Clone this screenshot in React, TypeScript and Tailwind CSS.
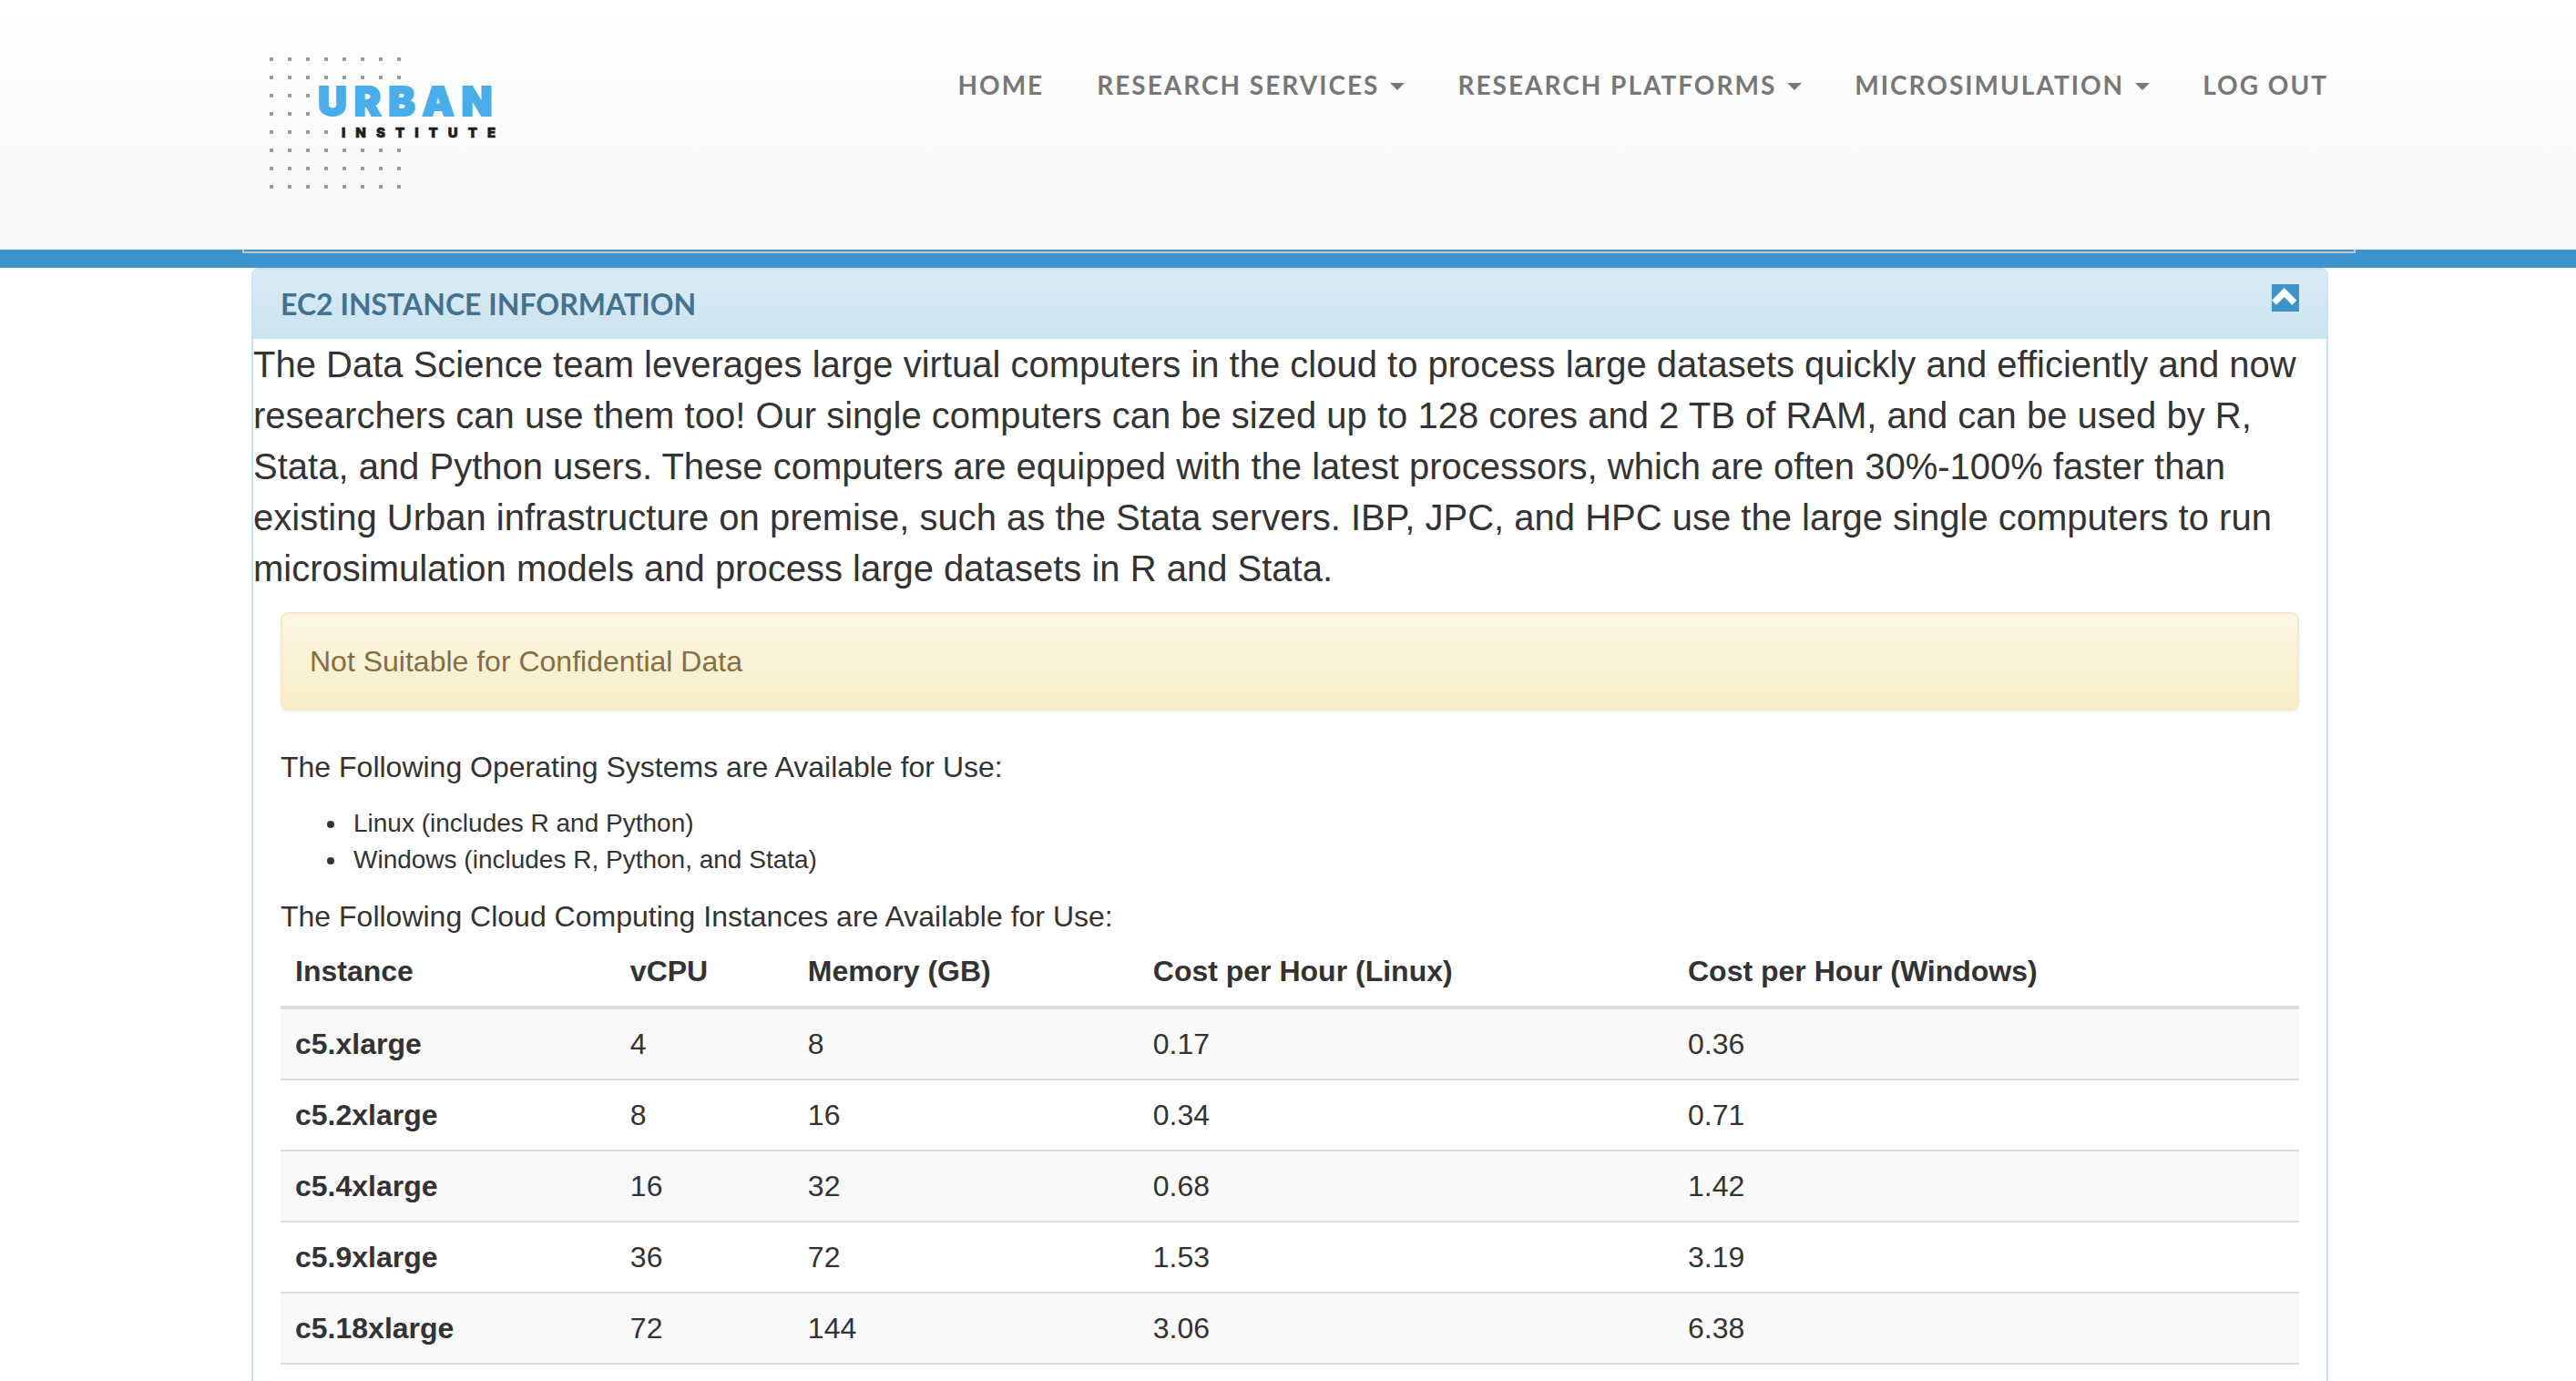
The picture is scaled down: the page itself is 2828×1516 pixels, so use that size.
import React from "react";

const navItems = [
  { label: "HOME", menu: false },
  { label: "RESEARCH SERVICES", menu: true },
  { label: "RESEARCH PLATFORMS", menu: true },
  { label: "MICROSIMULATION", menu: true },
  { label: "LOG OUT", menu: false },
];

const columns = [
  { label: "Instance", width: "w-[16.6%]" },
  { label: "vCPU", width: "w-[8.8%]" },
  { label: "Memory (GB)", width: "w-[17.1%]" },
  { label: "Cost per Hour (Linux)", width: "w-[26.5%]" },
  { label: "Cost per Hour (Windows)", width: "w-[31%]" },
];

const rows = [
  ["c5.xlarge", "4", "8", "0.17", "0.36"],
  ["c5.2xlarge", "8", "16", "0.34", "0.71"],
  ["c5.4xlarge", "16", "32", "0.68", "1.42"],
  ["c5.9xlarge", "36", "72", "1.53", "3.19"],
  ["c5.18xlarge", "72", "144", "3.06", "6.38"],
];

// Number of dots in each row of the logo's grid
const dotRows = [8, 8, 3, 3, 4, 8, 8, 8];

function Logo() {
  return (
    <a href="#" aria-label="Urban Institute" className="block">
      <svg width="260" height="148" viewBox="0 0 260 148" className="block">
        {dotRows.map((count, row) =>
          Array.from({ length: count }, (_, col) => (
            <rect key={`${row}-${col}`} x={col * 20} y={row * 20} width="4" height="4" fill="#9b9b9b" />
          )),
        )}
        <text
          x="53"
          y="64"
          fill="#49adea"
          stroke="#49adea"
          strokeWidth="2"
          className="font-['Inter'] text-[44px] font-black tracking-[8px]"
        >
          URBAN
        </text>
        <text x="79" y="88" fill="#1d1d1d" stroke="#1d1d1d" strokeWidth="0.5" className="font-['Inter'] text-[15px] font-black tracking-[11px]">
          INSTITUTE
        </text>
      </svg>
    </a>
  );
}

function Header() {
  return (
    <header className="border-b-[20px] border-[#3d94cc] bg-linear-to-b from-white to-[#f8f8f8]">
      <div className="relative mx-auto flex h-[274px] w-full max-w-[2340px] items-start justify-between pr-7 pl-[52px]">
        <div className="pt-[63px]">
          <Logo />
        </div>
        <nav aria-label="Main" className="pt-[73px]">
          <ul className="flex gap-[58px] font-['Lato',sans-serif] text-[28px] leading-[40px] font-bold tracking-[2px] text-[#777]">
            {navItems.map((item) => (
              <li key={item.label}>
                <a href="#" className="flex items-center gap-3 whitespace-nowrap">
                  {item.label}
                  {item.menu && (
                    <svg width="16" height="8" viewBox="0 0 16 8" className="mt-1 fill-current" aria-hidden="true">
                      <path d="M0 0H16L8 8Z" />
                    </svg>
                  )}
                </a>
              </li>
            ))}
          </ul>
        </nav>
        <div className="absolute -right-0.5 left-[22px] top-full h-1 border-x-2 border-b-2 border-[#c5c5c5]" />
      </div>
    </header>
  );
}

function InstanceTable() {
  return (
    <table className="w-full table-fixed border-collapse text-left text-[32px] leading-[44px]">
      <thead>
        <tr className="border-b-4 border-[#ddd]">
          {columns.map((c) => (
            <th key={c.label} scope="col" className={`p-4 font-bold ${c.width}`}>
              {c.label}
            </th>
          ))}
        </tr>
      </thead>
      <tbody>
        {rows.map(([name, ...values]) => (
          <tr key={name} className="border-b-2 border-[#ddd] odd:bg-[#f9f9f9]">
            <th scope="row" className="p-4 font-bold">
              {name}
            </th>
            {values.map((v, i) => (
              <td key={i} className="p-4">
                {v}
              </td>
            ))}
          </tr>
        ))}
      </tbody>
    </table>
  );
}

export default function App() {
  return (
    <div className="flex min-h-screen flex-col bg-white font-['Liberation_Sans',Arial,sans-serif] text-[#333]">
      <Header />
      <main className="mx-auto flex w-full max-w-[2340px] flex-1 flex-col pr-7 pl-8">
        <section className="flex-1 rounded-t-lg border-2 border-b-0 border-[#c4e6f0]">
          <div className="flex items-start justify-between rounded-t-md bg-linear-to-b from-[#dcecf6] to-[#c9e3f0] px-[30px] py-4">
            <h1 className="font-['Lato',sans-serif] text-[32px] leading-[44px] font-bold text-[#437290]">
              EC2 INSTANCE INFORMATION
            </h1>
            <button type="button" aria-label="Collapse panel" className="block size-[30px] bg-[#3d94cc]">
              <svg width="30" height="30" viewBox="0 0 30 30" className="block" aria-hidden="true">
                <path d="M13.7 4L27.3 17.7L22.3 22.7L13.7 14.1L5 22.7L0 17.7Z" fill="#fff" />
              </svg>
            </button>
          </div>
          <p className="text-[40px] leading-[56px]">
            The Data Science team leverages large virtual computers in the cloud to process large datasets quickly and
            efficiently and now researchers can use them too! Our single computers can be sized up to 128 cores and 2 TB
            of RAM, and can be used by R, Stata, and Python users. These computers are equipped with the latest
            processors, which are often 30%-100% faster than existing Urban infrastructure on premise, such as the Stata
            servers. IBP, JPC, and HPC use the large single computers to run microsimulation models and process large
            datasets in R and Stata.
          </p>
          <div className="px-[30px] pt-5 text-[32px] leading-[44px]">
            <div
              role="alert"
              className="mb-10 rounded-lg border-2 border-[#f7e8cf] bg-linear-to-b from-[#fcf7e4] to-[#f6eec5] p-[30px] text-[#866d43] shadow-[0_2px_4px_rgba(0,0,0,0.05)]"
            >
              Not Suitable for Confidential Data
            </div>
            <p>The Following Operating Systems are Available for Use:</p>
            <ul className="my-5 list-disc pl-[74px] text-[28px] leading-[40px]">
              <li className="pl-1.5">Linux (includes R and Python)</li>
              <li className="pl-1.5">Windows (includes R, Python, and Stata)</li>
            </ul>
            <p>The Following Cloud Computing Instances are Available for Use:</p>
            <InstanceTable />
          </div>
        </section>
      </main>
    </div>
  );
}
